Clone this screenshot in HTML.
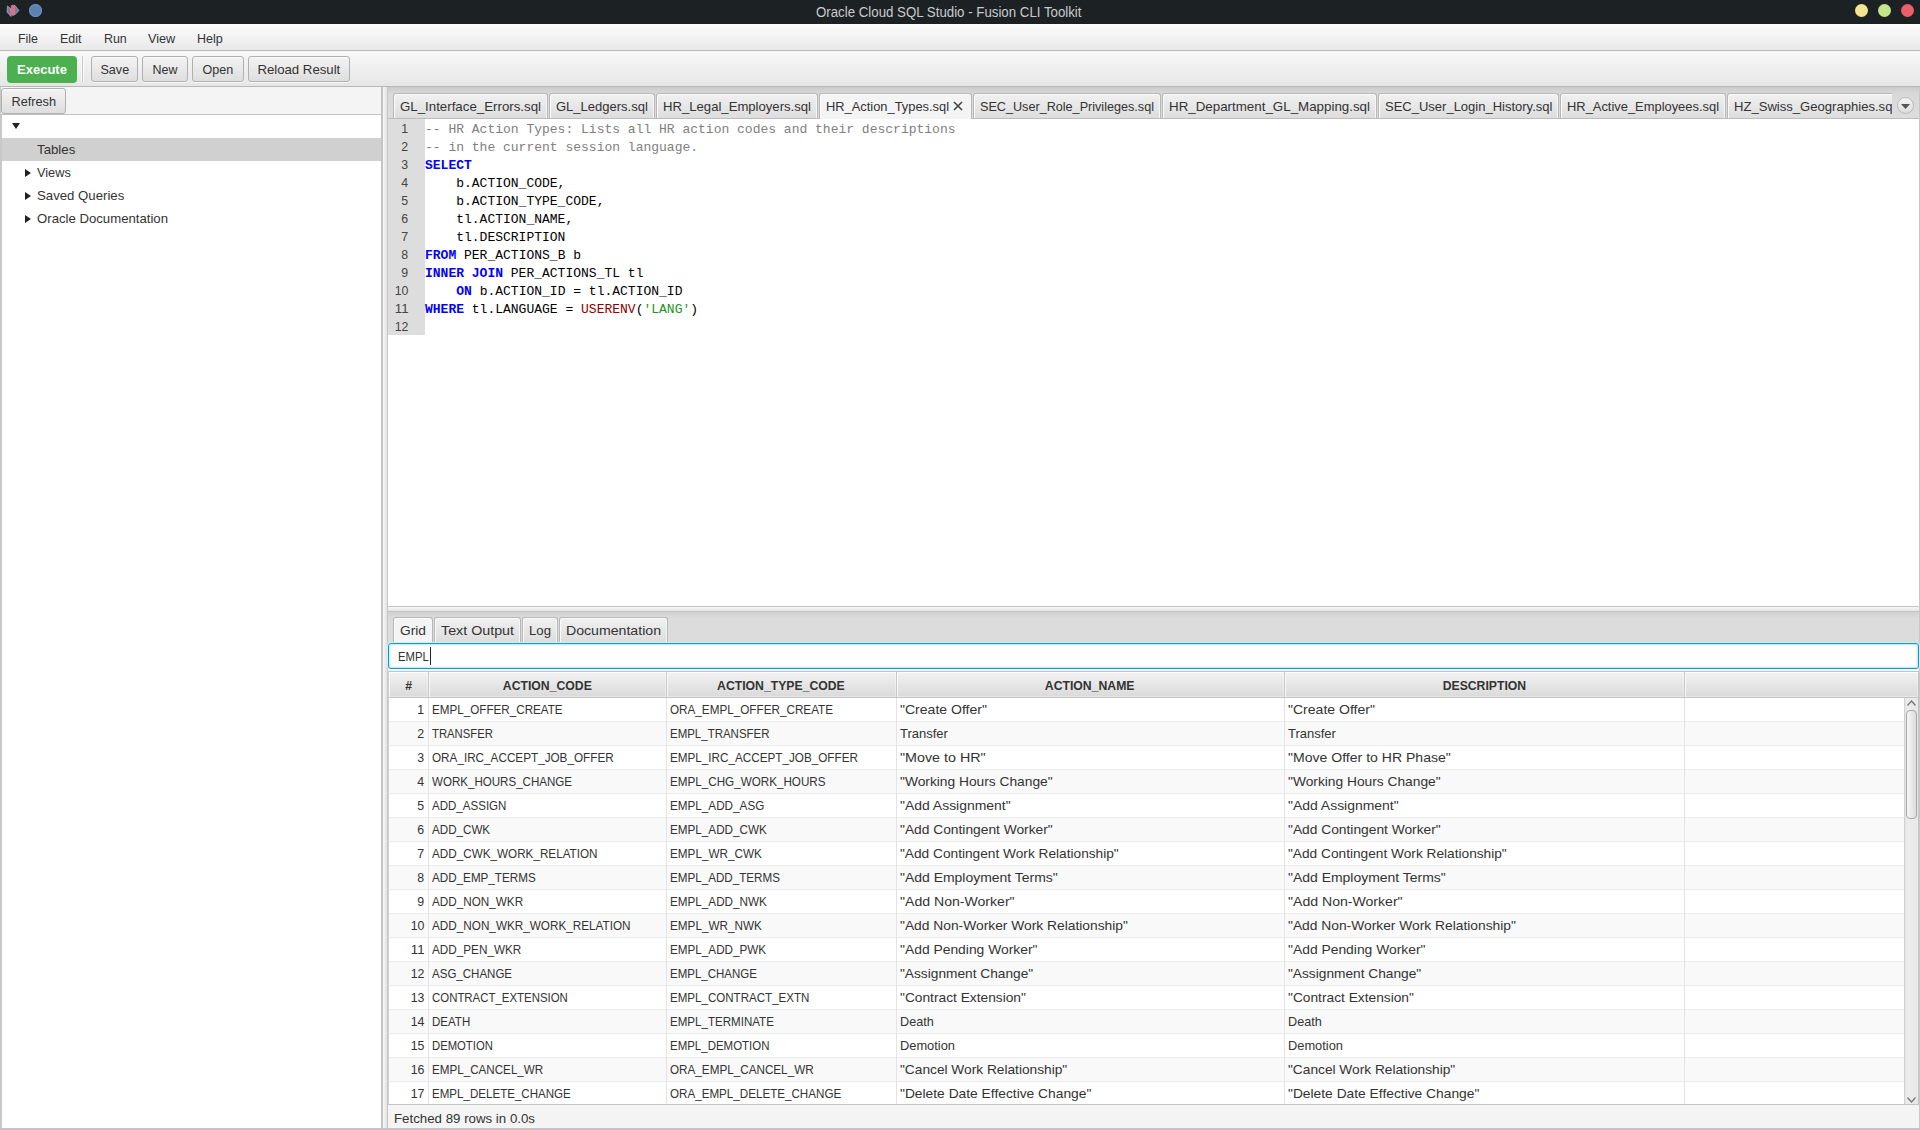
<!DOCTYPE html><html><head><meta charset="utf-8"><style>
html,body{margin:0;padding:0;width:1920px;height:1130px;overflow:hidden;background:#f4f4f4;font-family:"Liberation Sans",sans-serif}
div{position:absolute;box-sizing:border-box}
.t{white-space:pre;font-family:"Liberation Sans",sans-serif}
.btn{border:1px solid #b0b0b0;border-radius:3px;background:linear-gradient(#f3f3f3,#dedede);box-shadow:inset 0 1px 0 #fafafa,0 1px 0 rgba(255,255,255,.7)}
.tab{border:1px solid #b8b8b8;border-bottom:none;border-radius:3px 3px 0 0;background:linear-gradient(#f1f1f1,#dddddd);box-shadow:inset 1px 1px 0 #fbfbfb,inset -1px 0 0 #f6f6f6}
.tab.act{background:#f4f4f4}
.code{font-family:"Liberation Mono",monospace;font-size:13px;line-height:13px;white-space:pre;color:#000}
.c{color:#808080}.k{color:#0000ff;font-weight:bold}.n{color:#000}.f{color:#8b0000}.s{color:#1a961a}
</style></head><body>
<div style="left:0px;top:0px;width:1920px;height:24px;background:#1c2124"></div>
<svg style="position:absolute;left:5px;top:3px" width="16" height="16" viewBox="0 0 16 16">
<path d="M2.5 3 L6 6 L6 13.5 L2 9 Z" fill="#7479a8" stroke="#b4b4c4" stroke-width="0.7"/><path d="M9.5 2 L14 7.5 L9.5 12 Z" fill="#7479a8" stroke="#b4b4c4" stroke-width="0.7"/>
<rect x="6" y="2" width="3.6" height="10.6" rx="1.6" fill="#f56666" stroke="#9a8cc0" stroke-width="0.5"/></svg>
<div style="left:29px;top:4px;width:13px;height:13px;border-radius:50%;background:#5e82b0;box-shadow:inset 0 0 0 1px #6a92c4"></div>
<div class="t" style="left:816.00px;top:5px;font-size:14px;line-height:14px;color:#c9cbcc;transform:scaleX(0.9478);transform-origin:left;">Oracle Cloud SQL Studio - Fusion CLI Toolkit</div>
<div style="left:1855px;top:4px;width:13px;height:13px;border-radius:50%;background:#f4e48e"></div>
<div style="left:1878px;top:4px;width:13px;height:13px;border-radius:50%;background:#c3e68c"></div>
<div style="left:1901px;top:4px;width:13px;height:13px;border-radius:50%;background:#ea5f69"></div>
<div style="left:0px;top:24px;width:1920px;height:26px;background:linear-gradient(#fdfdfd,#e8e8e8)"></div>
<div style="left:0px;top:50px;width:1920px;height:1px;background:#b9b9b9"></div>
<div class="t" style="left:18.00px;top:32px;font-size:13px;line-height:13px;color:#333;transform:scaleX(0.9568);transform-origin:left;">File</div>
<div class="t" style="left:60.00px;top:32px;font-size:13px;line-height:13px;color:#333;transform:scaleX(0.9556);transform-origin:left;">Edit</div>
<div class="t" style="left:104.00px;top:32px;font-size:13px;line-height:13px;color:#333;transform:scaleX(0.9547);transform-origin:left;">Run</div>
<div class="t" style="left:148.00px;top:32px;font-size:13px;line-height:13px;color:#333;transform:scaleX(0.9751);transform-origin:left;">View</div>
<div class="t" style="left:197.00px;top:32px;font-size:13px;line-height:13px;color:#333;transform:scaleX(0.9608);transform-origin:left;">Help</div>
<div style="left:0px;top:51px;width:1920px;height:35px;background:linear-gradient(#f8f8f8,#e6e6e6)"></div>
<div style="left:0px;top:86px;width:1920px;height:1px;background:#b8b8b8"></div>
<div style="left:7px;top:56px;width:70px;height:27px;background:#4caf50;border-radius:4px"></div>
<div class="t" style="left:17.07px;top:63px;font-size:13px;line-height:13px;color:#fff;font-weight:bold;">Execute</div>
<div style="left:81px;top:56px;width:3px;height:26px;background:linear-gradient(to right,#fdfdfd 0,#fdfdfd 1px,#c4c4c4 1px,#c4c4c4 2px,#fdfdfd 2px)"></div>
<div class="btn" style="left:91px;top:56px;width:47px;height:26px"></div>
<div class="t" style="left:99.68px;top:63px;font-size:13px;line-height:13px;color:#333;transform:scaleX(0.9692);transform-origin:center;">Save</div>
<div class="btn" style="left:142px;top:56px;width:46px;height:26px"></div>
<div class="t" style="left:152.00px;top:63px;font-size:13px;line-height:13px;color:#333;transform:scaleX(0.9594);transform-origin:center;">New</div>
<div class="btn" style="left:192px;top:56px;width:52px;height:26px"></div>
<div class="t" style="left:202.10px;top:63px;font-size:13px;line-height:13px;color:#333;transform:scaleX(0.9655);transform-origin:center;">Open</div>
<div class="btn" style="left:248px;top:56px;width:102px;height:26px"></div>
<div class="t" style="left:258.17px;top:63px;font-size:13px;line-height:13px;color:#333;transform:scaleX(1.0152);transform-origin:center;">Reload Result</div>
<div style="left:0px;top:87px;width:383px;height:27px;background:#f4f4f4"></div>
<div class="btn" style="left:1px;top:88px;width:65px;height:26px"></div>
<div class="t" style="left:10.74px;top:95px;font-size:13px;line-height:13px;color:#333;transform:scaleX(0.9815);transform-origin:center;">Refresh</div>
<div style="left:1px;top:114px;width:381px;height:1015px;background:#fff;border-top:1px solid #c2c2c2;box-sizing:border-box"></div>
<div style="left:0px;top:87px;width:1px;height:1043px;background:#c8c8c8"></div>
<div style="left:1px;top:114px;width:1px;height:1016px;background:#c8c8c8"></div>
<svg style="position:absolute;left:11px;top:122px" width="10" height="8"><path d="M1 1 L9 1 L5 7 Z" fill="#222"/></svg>
<div style="left:2px;top:138px;width:379px;height:23px;background:#d0d0d0"></div>
<div class="t" style="left:37.00px;top:143px;font-size:13px;line-height:13px;color:#333;transform:scaleX(1.0195);transform-origin:left;">Tables</div>
<svg style="position:absolute;left:24px;top:168px" width="8" height="10"><path d="M1 1 L7 5 L1 9 Z" fill="#222"/></svg>
<div class="t" style="left:37.00px;top:166px;font-size:13px;line-height:13px;color:#333;transform:scaleX(0.9819);transform-origin:left;">Views</div>
<svg style="position:absolute;left:24px;top:191px" width="8" height="10"><path d="M1 1 L7 5 L1 9 Z" fill="#222"/></svg>
<div class="t" style="left:37.00px;top:189px;font-size:13px;line-height:13px;color:#333;transform:scaleX(1.0150);transform-origin:left;">Saved Queries</div>
<svg style="position:absolute;left:24px;top:214px" width="8" height="10"><path d="M1 1 L7 5 L1 9 Z" fill="#222"/></svg>
<div class="t" style="left:37.00px;top:212px;font-size:13px;line-height:13px;color:#333;transform:scaleX(1.0129);transform-origin:left;">Oracle Documentation</div>
<div style="left:381px;top:87px;width:2px;height:1043px;background:#c4c4c4"></div>
<div style="left:383px;top:87px;width:4px;height:1043px;background:linear-gradient(to right,#f8f8f8,#e2e2e2)"></div>
<div style="left:387px;top:87px;width:1px;height:1043px;background:#c8c8c8"></div>
<div style="left:1919px;top:87px;width:1px;height:1043px;background:#c8c8c8"></div>
<div style="left:1918px;top:671px;width:1px;height:434px;background:#c4c4c4"></div>
<div style="left:0px;top:1128px;width:1920px;height:2px;background:#c4c4c4"></div>
<div style="left:388px;top:87px;width:1531px;height:31px;background:linear-gradient(#cbcbcb,#d9d9d9 7px,#dddddd)"></div>
<div style="left:388px;top:118px;width:1531px;height:1px;background:#bdbdbd"></div>
<div style="left:388px;top:87px;width:1504px;height:32px;overflow:hidden">
<div class="tab" style="left:5px;top:6px;width:155px;height:25px"></div>
<div class="t" style="left:12.00px;top:13px;font-size:13px;line-height:13px;color:#333;transform:scaleX(1.0217);transform-origin:left;">GL_Interface_Errors.sql</div>
<div class="tab" style="left:161px;top:6px;width:106px;height:25px"></div>
<div class="t" style="left:168.00px;top:13px;font-size:13px;line-height:13px;color:#333;">GL_Ledgers.sql</div>
<div class="tab" style="left:268px;top:6px;width:162px;height:25px"></div>
<div class="t" style="left:275.00px;top:13px;font-size:13px;line-height:13px;color:#333;transform:scaleX(1.0090);transform-origin:left;">HR_Legal_Employers.sql</div>
<div class="tab act" style="left:431px;top:6px;width:153px;height:31px"></div>
<div class="t" style="left:438.00px;top:13px;font-size:13px;line-height:13px;color:#333;transform:scaleX(0.9897);transform-origin:left;">HR_Action_Types.sql</div>
<div class="tab" style="left:585px;top:6px;width:188px;height:25px"></div>
<div class="t" style="left:592.00px;top:13px;font-size:13px;line-height:13px;color:#333;transform:scaleX(0.9710);transform-origin:left;">SEC_User_Role_Privileges.sql</div>
<div class="tab" style="left:774px;top:6px;width:215px;height:25px"></div>
<div class="t" style="left:781.00px;top:13px;font-size:13px;line-height:13px;color:#333;transform:scaleX(1.0264);transform-origin:left;">HR_Department_GL_Mapping.sql</div>
<div class="tab" style="left:990px;top:6px;width:181px;height:25px"></div>
<div class="t" style="left:997.00px;top:13px;font-size:13px;line-height:13px;color:#333;">SEC_User_Login_History.sql</div>
<div class="tab" style="left:1172px;top:6px;width:166px;height:25px"></div>
<div class="t" style="left:1179.00px;top:13px;font-size:13px;line-height:13px;color:#333;transform:scaleX(0.9923);transform-origin:left;">HR_Active_Employees.sql</div>
<div class="tab" style="left:1339px;top:6px;width:204px;height:25px"></div>
<div class="t" style="left:1346.00px;top:13px;font-size:13px;line-height:13px;color:#333;transform:scaleX(1.0057);transform-origin:left;">HZ_Swiss_Geographies.sql</div>
</div>
<svg style="position:absolute;left:953px;top:101px" width="10" height="10"><path d="M1 1 L9 9 M9 1 L1 9" stroke="#444" stroke-width="1.6"/></svg>
<div style="left:1897px;top:97px;width:17px;height:17px;border-radius:50%;border:1px solid #b8b8b8;background:linear-gradient(#f4f4f4,#dedede)"></div>
<svg style="position:absolute;left:1900px;top:103px" width="11" height="7"><path d="M1 1 L10 1 L5.5 6 Z" fill="#555"/></svg>
<div style="left:388px;top:119px;width:1531px;height:487px;background:#fff"></div>
<div style="left:388px;top:119px;width:37px;height:216px;background:#dddddd"></div>
<div style="left:388px;top:606px;width:1531px;height:1px;background:#c6c6c6"></div>
<div class="t" style="left:400.77px;top:122px;font-size:13px;line-height:13px;color:#444;transform:scaleX(0.9500);transform-origin:right;">1</div>
<div class="code" style="left:425px;top:123px"><span class="c">-- HR Action Types: Lists all HR action codes and their descriptions</span></div>
<div class="t" style="left:400.77px;top:140px;font-size:13px;line-height:13px;color:#444;transform:scaleX(0.9500);transform-origin:right;">2</div>
<div class="code" style="left:425px;top:141px"><span class="c">-- in the current session language.</span></div>
<div class="t" style="left:400.77px;top:158px;font-size:13px;line-height:13px;color:#444;transform:scaleX(0.9500);transform-origin:right;">3</div>
<div class="code" style="left:425px;top:159px"><span class="k">SELECT</span></div>
<div class="t" style="left:400.77px;top:176px;font-size:13px;line-height:13px;color:#444;transform:scaleX(0.9500);transform-origin:right;">4</div>
<div class="code" style="left:425px;top:177px"><span class="n">    b.ACTION_CODE,</span></div>
<div class="t" style="left:400.77px;top:194px;font-size:13px;line-height:13px;color:#444;transform:scaleX(0.9500);transform-origin:right;">5</div>
<div class="code" style="left:425px;top:195px"><span class="n">    b.ACTION_TYPE_CODE,</span></div>
<div class="t" style="left:400.77px;top:212px;font-size:13px;line-height:13px;color:#444;transform:scaleX(0.9500);transform-origin:right;">6</div>
<div class="code" style="left:425px;top:213px"><span class="n">    tl.ACTION_NAME,</span></div>
<div class="t" style="left:400.77px;top:230px;font-size:13px;line-height:13px;color:#444;transform:scaleX(0.9500);transform-origin:right;">7</div>
<div class="code" style="left:425px;top:231px"><span class="n">    tl.DESCRIPTION</span></div>
<div class="t" style="left:400.77px;top:248px;font-size:13px;line-height:13px;color:#444;transform:scaleX(0.9500);transform-origin:right;">8</div>
<div class="code" style="left:425px;top:249px"><span class="k">FROM</span><span class="n"> PER_ACTIONS_B b</span></div>
<div class="t" style="left:400.77px;top:266px;font-size:13px;line-height:13px;color:#444;transform:scaleX(0.9500);transform-origin:right;">9</div>
<div class="code" style="left:425px;top:267px"><span class="k">INNER JOIN</span><span class="n"> PER_ACTIONS_TL tl</span></div>
<div class="t" style="left:393.54px;top:284px;font-size:13px;line-height:13px;color:#444;transform:scaleX(0.9500);transform-origin:right;">10</div>
<div class="code" style="left:425px;top:285px"><span class="n">    </span><span class="k">ON</span><span class="n"> b.ACTION_ID = tl.ACTION_ID</span></div>
<div class="t" style="left:394.50px;top:302px;font-size:13px;line-height:13px;color:#444;transform:scaleX(1.0179);transform-origin:right;">11</div>
<div class="code" style="left:425px;top:303px"><span class="k">WHERE</span><span class="n"> tl.LANGUAGE = </span><span class="f">USERENV</span><span class="n">(</span><span class="s">&#x27;LANG&#x27;</span><span class="n">)</span></div>
<div class="t" style="left:393.54px;top:320px;font-size:13px;line-height:13px;color:#444;transform:scaleX(0.9500);transform-origin:right;">12</div>
<div class="code" style="left:425px;top:321px"></div>
<div style="left:388px;top:607px;width:1531px;height:4px;background:linear-gradient(#f8f8f8,#e4e4e4)"></div>
<div style="left:388px;top:611px;width:1531px;height:1px;background:#c4c4c4"></div>
<div style="left:388px;top:612px;width:1531px;height:31px;background:linear-gradient(#d0d0d0,#dcdcdc 6px,#dcdcdc)"></div>
<div class="tab act" style="left:393px;top:617px;width:40px;height:26px"></div>
<div class="t" style="left:400.00px;top:624px;font-size:13px;line-height:13px;color:#333;transform:scaleX(1.0587);transform-origin:left;">Grid</div>
<div class="tab" style="left:434px;top:617px;width:87px;height:25px"></div>
<div class="t" style="left:441.00px;top:624px;font-size:13px;line-height:13px;color:#333;transform:scaleX(1.0981);transform-origin:left;">Text Output</div>
<div class="tab" style="left:522px;top:617px;width:36px;height:25px"></div>
<div class="t" style="left:529.00px;top:624px;font-size:13px;line-height:13px;color:#333;transform:scaleX(1.0143);transform-origin:left;">Log</div>
<div class="tab" style="left:559px;top:617px;width:109px;height:25px"></div>
<div class="t" style="left:566.00px;top:624px;font-size:13px;line-height:13px;color:#333;transform:scaleX(1.0865);transform-origin:left;">Documentation</div>
<div style="left:388px;top:643px;width:1531px;height:26px;box-sizing:border-box;border:1px solid #0a9dd2;border-radius:3px;background:#fff;box-shadow:inset 0 0 0 1px #cdeaf6,inset 0 0 0 2px #eaf6fb,0 0 0 1px #d6edf7"></div>
<div class="t" style="left:398.00px;top:650px;font-size:13px;line-height:13px;color:#333;transform:scaleX(0.8680);transform-origin:left;">EMPL</div>
<div style="left:430px;top:647px;width:1px;height:18px;background:#222"></div>
<div style="left:388px;top:669px;width:1531px;height:2px;background:#f4f4f4"></div>
<div style="left:388px;top:671px;width:1530px;height:434px;background:#fff"></div>
<div style="left:388px;top:671px;width:1530px;height:1px;background:#c4c4c4"></div>
<div style="left:389px;top:672px;width:1529px;height:25px;background:linear-gradient(#f2f2f2,#dadada)"></div>
<div style="left:388px;top:697px;width:1530px;height:1px;background:#c4c4c4"></div>
<div style="left:389px;top:672px;width:39px;height:25px;background:linear-gradient(#f2f2f2,#dadada);box-shadow:inset 1px 1px 0 rgba(255,255,255,.75),inset -1px -1px 0 rgba(255,255,255,.35)"></div>
<div style="left:428px;top:672px;width:1px;height:25px;background:#c8c8c8"></div>
<div style="left:429px;top:672px;width:237px;height:25px;background:linear-gradient(#f2f2f2,#dadada);box-shadow:inset 1px 1px 0 rgba(255,255,255,.75),inset -1px -1px 0 rgba(255,255,255,.35)"></div>
<div style="left:666px;top:672px;width:1px;height:25px;background:#c8c8c8"></div>
<div style="left:667px;top:672px;width:229px;height:25px;background:linear-gradient(#f2f2f2,#dadada);box-shadow:inset 1px 1px 0 rgba(255,255,255,.75),inset -1px -1px 0 rgba(255,255,255,.35)"></div>
<div style="left:896px;top:672px;width:1px;height:25px;background:#c8c8c8"></div>
<div style="left:897px;top:672px;width:387px;height:25px;background:linear-gradient(#f2f2f2,#dadada);box-shadow:inset 1px 1px 0 rgba(255,255,255,.75),inset -1px -1px 0 rgba(255,255,255,.35)"></div>
<div style="left:1284px;top:672px;width:1px;height:25px;background:#c8c8c8"></div>
<div style="left:1285px;top:672px;width:399px;height:25px;background:linear-gradient(#f2f2f2,#dadada);box-shadow:inset 1px 1px 0 rgba(255,255,255,.75),inset -1px -1px 0 rgba(255,255,255,.35)"></div>
<div style="left:1684px;top:672px;width:1px;height:25px;background:#c8c8c8"></div>
<div style="left:1685px;top:672px;width:233px;height:25px;background:linear-gradient(#f2f2f2,#dadada);box-shadow:inset 1px 1px 0 rgba(255,255,255,.75),inset -1px -1px 0 rgba(255,255,255,.35)"></div>
<div class="t" style="left:404.89px;top:679px;font-size:13px;line-height:13px;color:#333;font-weight:bold;transform:scaleX(0.9400);transform-origin:center;">#</div>
<div class="t" style="left:499.69px;top:679px;font-size:13px;line-height:13px;color:#333;font-weight:bold;transform:scaleX(0.9400);transform-origin:center;">ACTION_CODE</div>
<div class="t" style="left:713.10px;top:679px;font-size:13px;line-height:13px;color:#333;font-weight:bold;transform:scaleX(0.9400);transform-origin:center;">ACTION_TYPE_CODE</div>
<div class="t" style="left:1042.33px;top:679px;font-size:13px;line-height:13px;color:#333;font-weight:bold;transform:scaleX(0.9400);transform-origin:center;">ACTION_NAME</div>
<div class="t" style="left:1439.58px;top:679px;font-size:13px;line-height:13px;color:#333;font-weight:bold;transform:scaleX(0.9400);transform-origin:center;">DESCRIPTION</div>
<div style="left:388px;top:698px;width:1516px;height:406px;overflow:hidden">
<div style="left:1px;top:0px;width:1515px;height:23px;background:#ffffff"></div>
<div style="left:1px;top:23px;width:1515px;height:1px;background:#ececec"></div>
<div class="t" style="left:28.77px;top:5px;font-size:13px;line-height:13px;color:#333;transform:scaleX(0.9500);transform-origin:right;">1</div>
<div class="t" style="left:44.00px;top:5px;font-size:13px;line-height:13px;color:#333;transform:scaleX(0.8968);transform-origin:left;">EMPL_OFFER_CREATE</div>
<div class="t" style="left:282.00px;top:5px;font-size:13px;line-height:13px;color:#333;transform:scaleX(0.9004);transform-origin:left;">ORA_EMPL_OFFER_CREATE</div>
<div class="t" style="left:512.00px;top:5px;font-size:13px;line-height:13px;color:#333;transform:scaleX(1.0799);transform-origin:left;">&quot;Create Offer&quot;</div>
<div class="t" style="left:900.00px;top:5px;font-size:13px;line-height:13px;color:#333;transform:scaleX(1.0799);transform-origin:left;">&quot;Create Offer&quot;</div>
<div style="left:1px;top:24px;width:1515px;height:23px;background:#f9f9f9"></div>
<div style="left:1px;top:47px;width:1515px;height:1px;background:#ececec"></div>
<div class="t" style="left:28.77px;top:29px;font-size:13px;line-height:13px;color:#333;transform:scaleX(0.9500);transform-origin:right;">2</div>
<div class="t" style="left:44.00px;top:29px;font-size:13px;line-height:13px;color:#333;transform:scaleX(0.8680);transform-origin:left;">TRANSFER</div>
<div class="t" style="left:282.00px;top:29px;font-size:13px;line-height:13px;color:#333;transform:scaleX(0.8829);transform-origin:left;">EMPL_TRANSFER</div>
<div class="t" style="left:512.00px;top:29px;font-size:13px;line-height:13px;color:#333;">Transfer</div>
<div class="t" style="left:900.00px;top:29px;font-size:13px;line-height:13px;color:#333;">Transfer</div>
<div style="left:1px;top:48px;width:1515px;height:23px;background:#ffffff"></div>
<div style="left:1px;top:71px;width:1515px;height:1px;background:#ececec"></div>
<div class="t" style="left:28.77px;top:53px;font-size:13px;line-height:13px;color:#333;transform:scaleX(0.9500);transform-origin:right;">3</div>
<div class="t" style="left:44.00px;top:53px;font-size:13px;line-height:13px;color:#333;transform:scaleX(0.9013);transform-origin:left;">ORA_IRC_ACCEPT_JOB_OFFER</div>
<div class="t" style="left:282.00px;top:53px;font-size:13px;line-height:13px;color:#333;transform:scaleX(0.9001);transform-origin:left;">EMPL_IRC_ACCEPT_JOB_OFFER</div>
<div class="t" style="left:512.00px;top:53px;font-size:13px;line-height:13px;color:#333;transform:scaleX(1.0995);transform-origin:left;">&quot;Move to HR&quot;</div>
<div class="t" style="left:900.00px;top:53px;font-size:13px;line-height:13px;color:#333;transform:scaleX(1.0808);transform-origin:left;">&quot;Move Offer to HR Phase&quot;</div>
<div style="left:1px;top:72px;width:1515px;height:23px;background:#f9f9f9"></div>
<div style="left:1px;top:95px;width:1515px;height:1px;background:#ececec"></div>
<div class="t" style="left:28.77px;top:77px;font-size:13px;line-height:13px;color:#333;transform:scaleX(0.9500);transform-origin:right;">4</div>
<div class="t" style="left:44.00px;top:77px;font-size:13px;line-height:13px;color:#333;transform:scaleX(0.8893);transform-origin:left;">WORK_HOURS_CHANGE</div>
<div class="t" style="left:282.00px;top:77px;font-size:13px;line-height:13px;color:#333;transform:scaleX(0.8970);transform-origin:left;">EMPL_CHG_WORK_HOURS</div>
<div class="t" style="left:512.00px;top:77px;font-size:13px;line-height:13px;color:#333;transform:scaleX(1.0591);transform-origin:left;">&quot;Working Hours Change&quot;</div>
<div class="t" style="left:900.00px;top:77px;font-size:13px;line-height:13px;color:#333;transform:scaleX(1.0591);transform-origin:left;">&quot;Working Hours Change&quot;</div>
<div style="left:1px;top:96px;width:1515px;height:23px;background:#ffffff"></div>
<div style="left:1px;top:119px;width:1515px;height:1px;background:#ececec"></div>
<div class="t" style="left:28.77px;top:101px;font-size:13px;line-height:13px;color:#333;transform:scaleX(0.9500);transform-origin:right;">5</div>
<div class="t" style="left:44.00px;top:101px;font-size:13px;line-height:13px;color:#333;transform:scaleX(0.8880);transform-origin:left;">ADD_ASSIGN</div>
<div class="t" style="left:282.00px;top:101px;font-size:13px;line-height:13px;color:#333;transform:scaleX(0.9000);transform-origin:left;">EMPL_ADD_ASG</div>
<div class="t" style="left:512.00px;top:101px;font-size:13px;line-height:13px;color:#333;transform:scaleX(1.0725);transform-origin:left;">&quot;Add Assignment&quot;</div>
<div class="t" style="left:900.00px;top:101px;font-size:13px;line-height:13px;color:#333;transform:scaleX(1.0725);transform-origin:left;">&quot;Add Assignment&quot;</div>
<div style="left:1px;top:120px;width:1515px;height:23px;background:#f9f9f9"></div>
<div style="left:1px;top:143px;width:1515px;height:1px;background:#ececec"></div>
<div class="t" style="left:28.77px;top:125px;font-size:13px;line-height:13px;color:#333;transform:scaleX(0.9500);transform-origin:right;">6</div>
<div class="t" style="left:44.00px;top:125px;font-size:13px;line-height:13px;color:#333;transform:scaleX(0.8938);transform-origin:left;">ADD_CWK</div>
<div class="t" style="left:282.00px;top:125px;font-size:13px;line-height:13px;color:#333;transform:scaleX(0.8992);transform-origin:left;">EMPL_ADD_CWK</div>
<div class="t" style="left:512.00px;top:125px;font-size:13px;line-height:13px;color:#333;transform:scaleX(1.0598);transform-origin:left;">&quot;Add Contingent Worker&quot;</div>
<div class="t" style="left:900.00px;top:125px;font-size:13px;line-height:13px;color:#333;transform:scaleX(1.0598);transform-origin:left;">&quot;Add Contingent Worker&quot;</div>
<div style="left:1px;top:144px;width:1515px;height:23px;background:#ffffff"></div>
<div style="left:1px;top:167px;width:1515px;height:1px;background:#ececec"></div>
<div class="t" style="left:28.77px;top:149px;font-size:13px;line-height:13px;color:#333;transform:scaleX(0.9500);transform-origin:right;">7</div>
<div class="t" style="left:44.00px;top:149px;font-size:13px;line-height:13px;color:#333;transform:scaleX(0.8999);transform-origin:left;">ADD_CWK_WORK_RELATION</div>
<div class="t" style="left:282.00px;top:149px;font-size:13px;line-height:13px;color:#333;transform:scaleX(0.9009);transform-origin:left;">EMPL_WR_CWK</div>
<div class="t" style="left:512.00px;top:149px;font-size:13px;line-height:13px;color:#333;transform:scaleX(1.0530);transform-origin:left;">&quot;Add Contingent Work Relationship&quot;</div>
<div class="t" style="left:900.00px;top:149px;font-size:13px;line-height:13px;color:#333;transform:scaleX(1.0530);transform-origin:left;">&quot;Add Contingent Work Relationship&quot;</div>
<div style="left:1px;top:168px;width:1515px;height:23px;background:#f9f9f9"></div>
<div style="left:1px;top:191px;width:1515px;height:1px;background:#ececec"></div>
<div class="t" style="left:28.77px;top:173px;font-size:13px;line-height:13px;color:#333;transform:scaleX(0.9500);transform-origin:right;">8</div>
<div class="t" style="left:44.00px;top:173px;font-size:13px;line-height:13px;color:#333;transform:scaleX(0.8970);transform-origin:left;">ADD_EMP_TERMS</div>
<div class="t" style="left:282.00px;top:173px;font-size:13px;line-height:13px;color:#333;transform:scaleX(0.8953);transform-origin:left;">EMPL_ADD_TERMS</div>
<div class="t" style="left:512.00px;top:173px;font-size:13px;line-height:13px;color:#333;transform:scaleX(1.0736);transform-origin:left;">&quot;Add Employment Terms&quot;</div>
<div class="t" style="left:900.00px;top:173px;font-size:13px;line-height:13px;color:#333;transform:scaleX(1.0736);transform-origin:left;">&quot;Add Employment Terms&quot;</div>
<div style="left:1px;top:192px;width:1515px;height:23px;background:#ffffff"></div>
<div style="left:1px;top:215px;width:1515px;height:1px;background:#ececec"></div>
<div class="t" style="left:28.77px;top:197px;font-size:13px;line-height:13px;color:#333;transform:scaleX(0.9500);transform-origin:right;">9</div>
<div class="t" style="left:44.00px;top:197px;font-size:13px;line-height:13px;color:#333;transform:scaleX(0.9012);transform-origin:left;">ADD_NON_WKR</div>
<div class="t" style="left:282.00px;top:197px;font-size:13px;line-height:13px;color:#333;transform:scaleX(0.8992);transform-origin:left;">EMPL_ADD_NWK</div>
<div class="t" style="left:512.00px;top:197px;font-size:13px;line-height:13px;color:#333;transform:scaleX(1.0831);transform-origin:left;">&quot;Add Non-Worker&quot;</div>
<div class="t" style="left:900.00px;top:197px;font-size:13px;line-height:13px;color:#333;transform:scaleX(1.0831);transform-origin:left;">&quot;Add Non-Worker&quot;</div>
<div style="left:1px;top:216px;width:1515px;height:23px;background:#f9f9f9"></div>
<div style="left:1px;top:239px;width:1515px;height:1px;background:#ececec"></div>
<div class="t" style="left:21.54px;top:221px;font-size:13px;line-height:13px;color:#333;transform:scaleX(0.9500);transform-origin:right;">10</div>
<div class="t" style="left:44.00px;top:221px;font-size:13px;line-height:13px;color:#333;transform:scaleX(0.9023);transform-origin:left;">ADD_NON_WKR_WORK_RELATION</div>
<div class="t" style="left:282.00px;top:221px;font-size:13px;line-height:13px;color:#333;transform:scaleX(0.9009);transform-origin:left;">EMPL_WR_NWK</div>
<div class="t" style="left:512.00px;top:221px;font-size:13px;line-height:13px;color:#333;transform:scaleX(1.0615);transform-origin:left;">&quot;Add Non-Worker Work Relationship&quot;</div>
<div class="t" style="left:900.00px;top:221px;font-size:13px;line-height:13px;color:#333;transform:scaleX(1.0615);transform-origin:left;">&quot;Add Non-Worker Work Relationship&quot;</div>
<div style="left:1px;top:240px;width:1515px;height:23px;background:#ffffff"></div>
<div style="left:1px;top:263px;width:1515px;height:1px;background:#ececec"></div>
<div class="t" style="left:22.50px;top:245px;font-size:13px;line-height:13px;color:#333;transform:scaleX(1.0179);transform-origin:right;">11</div>
<div class="t" style="left:44.00px;top:245px;font-size:13px;line-height:13px;color:#333;transform:scaleX(0.9019);transform-origin:left;">ADD_PEN_WKR</div>
<div class="t" style="left:282.00px;top:245px;font-size:13px;line-height:13px;color:#333;transform:scaleX(0.8994);transform-origin:left;">EMPL_ADD_PWK</div>
<div class="t" style="left:512.00px;top:245px;font-size:13px;line-height:13px;color:#333;transform:scaleX(1.0663);transform-origin:left;">&quot;Add Pending Worker&quot;</div>
<div class="t" style="left:900.00px;top:245px;font-size:13px;line-height:13px;color:#333;transform:scaleX(1.0663);transform-origin:left;">&quot;Add Pending Worker&quot;</div>
<div style="left:1px;top:264px;width:1515px;height:23px;background:#f9f9f9"></div>
<div style="left:1px;top:287px;width:1515px;height:1px;background:#ececec"></div>
<div class="t" style="left:21.54px;top:269px;font-size:13px;line-height:13px;color:#333;transform:scaleX(0.9500);transform-origin:right;">12</div>
<div class="t" style="left:44.00px;top:269px;font-size:13px;line-height:13px;color:#333;transform:scaleX(0.8866);transform-origin:left;">ASG_CHANGE</div>
<div class="t" style="left:282.00px;top:269px;font-size:13px;line-height:13px;color:#333;transform:scaleX(0.8851);transform-origin:left;">EMPL_CHANGE</div>
<div class="t" style="left:512.00px;top:269px;font-size:13px;line-height:13px;color:#333;transform:scaleX(1.0547);transform-origin:left;">&quot;Assignment Change&quot;</div>
<div class="t" style="left:900.00px;top:269px;font-size:13px;line-height:13px;color:#333;transform:scaleX(1.0547);transform-origin:left;">&quot;Assignment Change&quot;</div>
<div style="left:1px;top:288px;width:1515px;height:23px;background:#ffffff"></div>
<div style="left:1px;top:311px;width:1515px;height:1px;background:#ececec"></div>
<div class="t" style="left:21.54px;top:293px;font-size:13px;line-height:13px;color:#333;transform:scaleX(0.9500);transform-origin:right;">13</div>
<div class="t" style="left:44.00px;top:293px;font-size:13px;line-height:13px;color:#333;transform:scaleX(0.8789);transform-origin:left;">CONTRACT_EXTENSION</div>
<div class="t" style="left:282.00px;top:293px;font-size:13px;line-height:13px;color:#333;transform:scaleX(0.8894);transform-origin:left;">EMPL_CONTRACT_EXTN</div>
<div class="t" style="left:512.00px;top:293px;font-size:13px;line-height:13px;color:#333;transform:scaleX(1.0573);transform-origin:left;">&quot;Contract Extension&quot;</div>
<div class="t" style="left:900.00px;top:293px;font-size:13px;line-height:13px;color:#333;transform:scaleX(1.0573);transform-origin:left;">&quot;Contract Extension&quot;</div>
<div style="left:1px;top:312px;width:1515px;height:23px;background:#f9f9f9"></div>
<div style="left:1px;top:335px;width:1515px;height:1px;background:#ececec"></div>
<div class="t" style="left:21.54px;top:317px;font-size:13px;line-height:13px;color:#333;transform:scaleX(0.9500);transform-origin:right;">14</div>
<div class="t" style="left:44.00px;top:317px;font-size:13px;line-height:13px;color:#333;transform:scaleX(0.8874);transform-origin:left;">DEATH</div>
<div class="t" style="left:282.00px;top:317px;font-size:13px;line-height:13px;color:#333;transform:scaleX(0.8895);transform-origin:left;">EMPL_TERMINATE</div>
<div class="t" style="left:512.00px;top:317px;font-size:13px;line-height:13px;color:#333;transform:scaleX(0.9723);transform-origin:left;">Death</div>
<div class="t" style="left:900.00px;top:317px;font-size:13px;line-height:13px;color:#333;transform:scaleX(0.9723);transform-origin:left;">Death</div>
<div style="left:1px;top:336px;width:1515px;height:23px;background:#ffffff"></div>
<div style="left:1px;top:359px;width:1515px;height:1px;background:#ececec"></div>
<div class="t" style="left:21.54px;top:341px;font-size:13px;line-height:13px;color:#333;transform:scaleX(0.9500);transform-origin:right;">15</div>
<div class="t" style="left:44.00px;top:341px;font-size:13px;line-height:13px;color:#333;transform:scaleX(0.8680);transform-origin:left;">DEMOTION</div>
<div class="t" style="left:282.00px;top:341px;font-size:13px;line-height:13px;color:#333;transform:scaleX(0.8829);transform-origin:left;">EMPL_DEMOTION</div>
<div class="t" style="left:512.00px;top:341px;font-size:13px;line-height:13px;color:#333;transform:scaleX(0.9869);transform-origin:left;">Demotion</div>
<div class="t" style="left:900.00px;top:341px;font-size:13px;line-height:13px;color:#333;transform:scaleX(0.9869);transform-origin:left;">Demotion</div>
<div style="left:1px;top:360px;width:1515px;height:23px;background:#f9f9f9"></div>
<div style="left:1px;top:383px;width:1515px;height:1px;background:#ececec"></div>
<div class="t" style="left:21.54px;top:365px;font-size:13px;line-height:13px;color:#333;transform:scaleX(0.9500);transform-origin:right;">16</div>
<div class="t" style="left:44.00px;top:365px;font-size:13px;line-height:13px;color:#333;transform:scaleX(0.8950);transform-origin:left;">EMPL_CANCEL_WR</div>
<div class="t" style="left:282.00px;top:365px;font-size:13px;line-height:13px;color:#333;transform:scaleX(0.8995);transform-origin:left;">ORA_EMPL_CANCEL_WR</div>
<div class="t" style="left:512.00px;top:365px;font-size:13px;line-height:13px;color:#333;transform:scaleX(1.0547);transform-origin:left;">&quot;Cancel Work Relationship&quot;</div>
<div class="t" style="left:900.00px;top:365px;font-size:13px;line-height:13px;color:#333;transform:scaleX(1.0547);transform-origin:left;">&quot;Cancel Work Relationship&quot;</div>
<div style="left:1px;top:384px;width:1515px;height:23px;background:#ffffff"></div>
<div style="left:1px;top:407px;width:1515px;height:1px;background:#ececec"></div>
<div class="t" style="left:21.54px;top:389px;font-size:13px;line-height:13px;color:#333;transform:scaleX(0.9500);transform-origin:right;">17</div>
<div class="t" style="left:44.00px;top:389px;font-size:13px;line-height:13px;color:#333;transform:scaleX(0.8895);transform-origin:left;">EMPL_DELETE_CHANGE</div>
<div class="t" style="left:282.00px;top:389px;font-size:13px;line-height:13px;color:#333;transform:scaleX(0.8943);transform-origin:left;">ORA_EMPL_DELETE_CHANGE</div>
<div class="t" style="left:512.00px;top:389px;font-size:13px;line-height:13px;color:#333;transform:scaleX(1.0616);transform-origin:left;">&quot;Delete Date Effective Change&quot;</div>
<div class="t" style="left:900.00px;top:389px;font-size:13px;line-height:13px;color:#333;transform:scaleX(1.0616);transform-origin:left;">&quot;Delete Date Effective Change&quot;</div>
<div style="left:40px;top:0px;width:1px;height:406px;background:#e4e4e4"></div>
<div style="left:278px;top:0px;width:1px;height:406px;background:#e4e4e4"></div>
<div style="left:508px;top:0px;width:1px;height:406px;background:#e4e4e4"></div>
<div style="left:896px;top:0px;width:1px;height:406px;background:#e4e4e4"></div>
<div style="left:1296px;top:0px;width:1px;height:406px;background:#e4e4e4"></div>
</div>
<div style="left:1904px;top:698px;width:14px;height:406px;background:linear-gradient(to right,#dedede,#ececec 3px,#e8e8e8)"></div>
<div style="left:1904px;top:698px;width:1px;height:406px;background:#d2d2d2"></div>
<svg style="position:absolute;left:1906px;top:699px" width="11" height="8"><path d="M1.5 6.5 L5.5 2 L9.5 6.5" stroke="#777" stroke-width="1.3" fill="none"/></svg>
<div style="left:1906px;top:710px;width:11px;height:109px;border:1px solid #a8a8a8;border-radius:4px;background:linear-gradient(to right,#f6f6f6,#dcdcdc)"></div>
<svg style="position:absolute;left:1906px;top:1096px" width="11" height="8"><path d="M1.5 1.5 L5.5 6 L9.5 1.5" stroke="#777" stroke-width="1.3" fill="none"/></svg>
<div style="left:388px;top:1104px;width:1530px;height:1px;background:#c4c4c4"></div>
<div style="left:388px;top:671px;width:1px;height:433px;background:#d0d0d0"></div>
<div style="left:388px;top:1105px;width:1531px;height:23px;background:#f4f4f4"></div>
<div class="t" style="left:394.00px;top:1112px;font-size:13px;line-height:13px;color:#333;transform:scaleX(1.0216);transform-origin:left;">Fetched 89 rows in 0.0s</div>
</body></html>
